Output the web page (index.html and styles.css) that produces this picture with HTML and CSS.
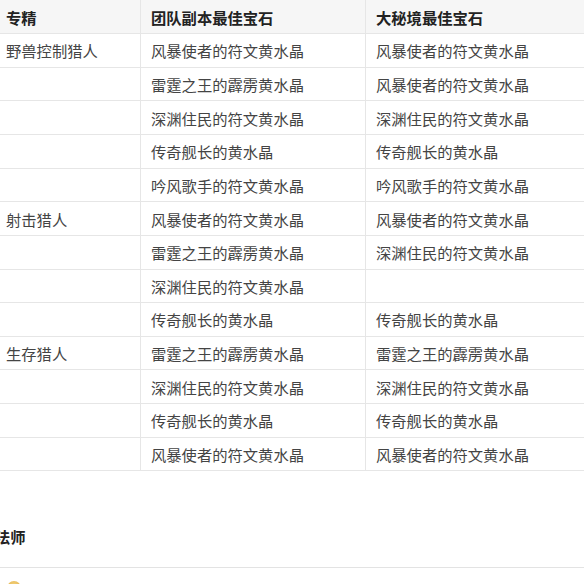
FILE: index.html
```html
<!DOCTYPE html>
<html lang="zh">
<head>
<meta charset="utf-8">
<link rel="stylesheet" href="styles.css">
</head>
<body>
<div class="page">
  <table class="gems">
    <thead>
      <tr><th class="c1">专精</th><th class="c2">团队副本最佳宝石</th><th class="c3">大秘境最佳宝石</th></tr>
    </thead>
    <tbody>
      <tr><td>野兽控制猎人</td><td>风暴使者的符文黄水晶</td><td>风暴使者的符文黄水晶</td></tr>
      <tr><td></td><td>雷霆之王的霹雳黄水晶</td><td>风暴使者的符文黄水晶</td></tr>
      <tr><td></td><td>深渊住民的符文黄水晶</td><td>深渊住民的符文黄水晶</td></tr>
      <tr><td></td><td>传奇舰长的黄水晶</td><td>传奇舰长的黄水晶</td></tr>
      <tr><td></td><td>吟风歌手的符文黄水晶</td><td>吟风歌手的符文黄水晶</td></tr>
      <tr><td>射击猎人</td><td>风暴使者的符文黄水晶</td><td>风暴使者的符文黄水晶</td></tr>
      <tr><td></td><td>雷霆之王的霹雳黄水晶</td><td>深渊住民的符文黄水晶</td></tr>
      <tr><td></td><td>深渊住民的符文黄水晶</td><td></td></tr>
      <tr><td></td><td>传奇舰长的黄水晶</td><td>传奇舰长的黄水晶</td></tr>
      <tr><td>生存猎人</td><td>雷霆之王的霹雳黄水晶</td><td>雷霆之王的霹雳黄水晶</td></tr>
      <tr><td></td><td>深渊住民的符文黄水晶</td><td>深渊住民的符文黄水晶</td></tr>
      <tr><td></td><td>传奇舰长的黄水晶</td><td>传奇舰长的黄水晶</td></tr>
      <tr><td></td><td>风暴使者的符文黄水晶</td><td>风暴使者的符文黄水晶</td></tr>
    </tbody>
  </table>
  <h3 class="section-title">法师</h3>
  <div class="next-block">
    <span class="avatar"></span>
  </div>
</div>
</body>
</html>
```
FILE: styles.css
```css
html, body {
  margin: 0;
  padding: 0;
  overflow: hidden;
  background: #ffffff;
}
body {
  font-family: "Noto Sans CJK SC", "Noto Sans", sans-serif;
  font-size: 15.3px;
  color: #444;
}
.page {
  width: 600px;
  margin-left: -5px;
}
.gems {
  width: 595px;
  border-collapse: collapse;
  table-layout: fixed;
}
.gems .c1 { width: 145px; }
.gems .c2 { width: 225px; }
.gems .c3 { width: 225px; }
.gems th,
.gems td {
  height: 33.64px;
  padding: 0 10px;
  box-sizing: border-box;
  text-align: left;
  vertical-align: middle;
  line-height: 20px;
  border: 1px solid #e6e6e6;
  border-top: none;
  white-space: nowrap;
}
.gems th {
  background: #f6f6f6;
  color: #222;
  font-weight: bold;
  border-bottom: 1px solid #e6e6e6;
}
.section-title {
  margin: 0;
  padding: 55px 0 0 0;
  height: 96px;
  box-sizing: border-box;
  font-size: 15.3px;
  line-height: 20px;
  color: #222;
  font-weight: bold;
}
.next-block {
  border-top: 1px solid #e3e3e3;
  height: 40px;
  padding: 13px 0 0 12px;
  box-sizing: border-box;
}
.avatar {
  display: block;
  width: 14px;
  height: 14px;
  border-radius: 50%;
  background: radial-gradient(circle at 50% 30%, #f4d27a, #d9a23a);
}
```
